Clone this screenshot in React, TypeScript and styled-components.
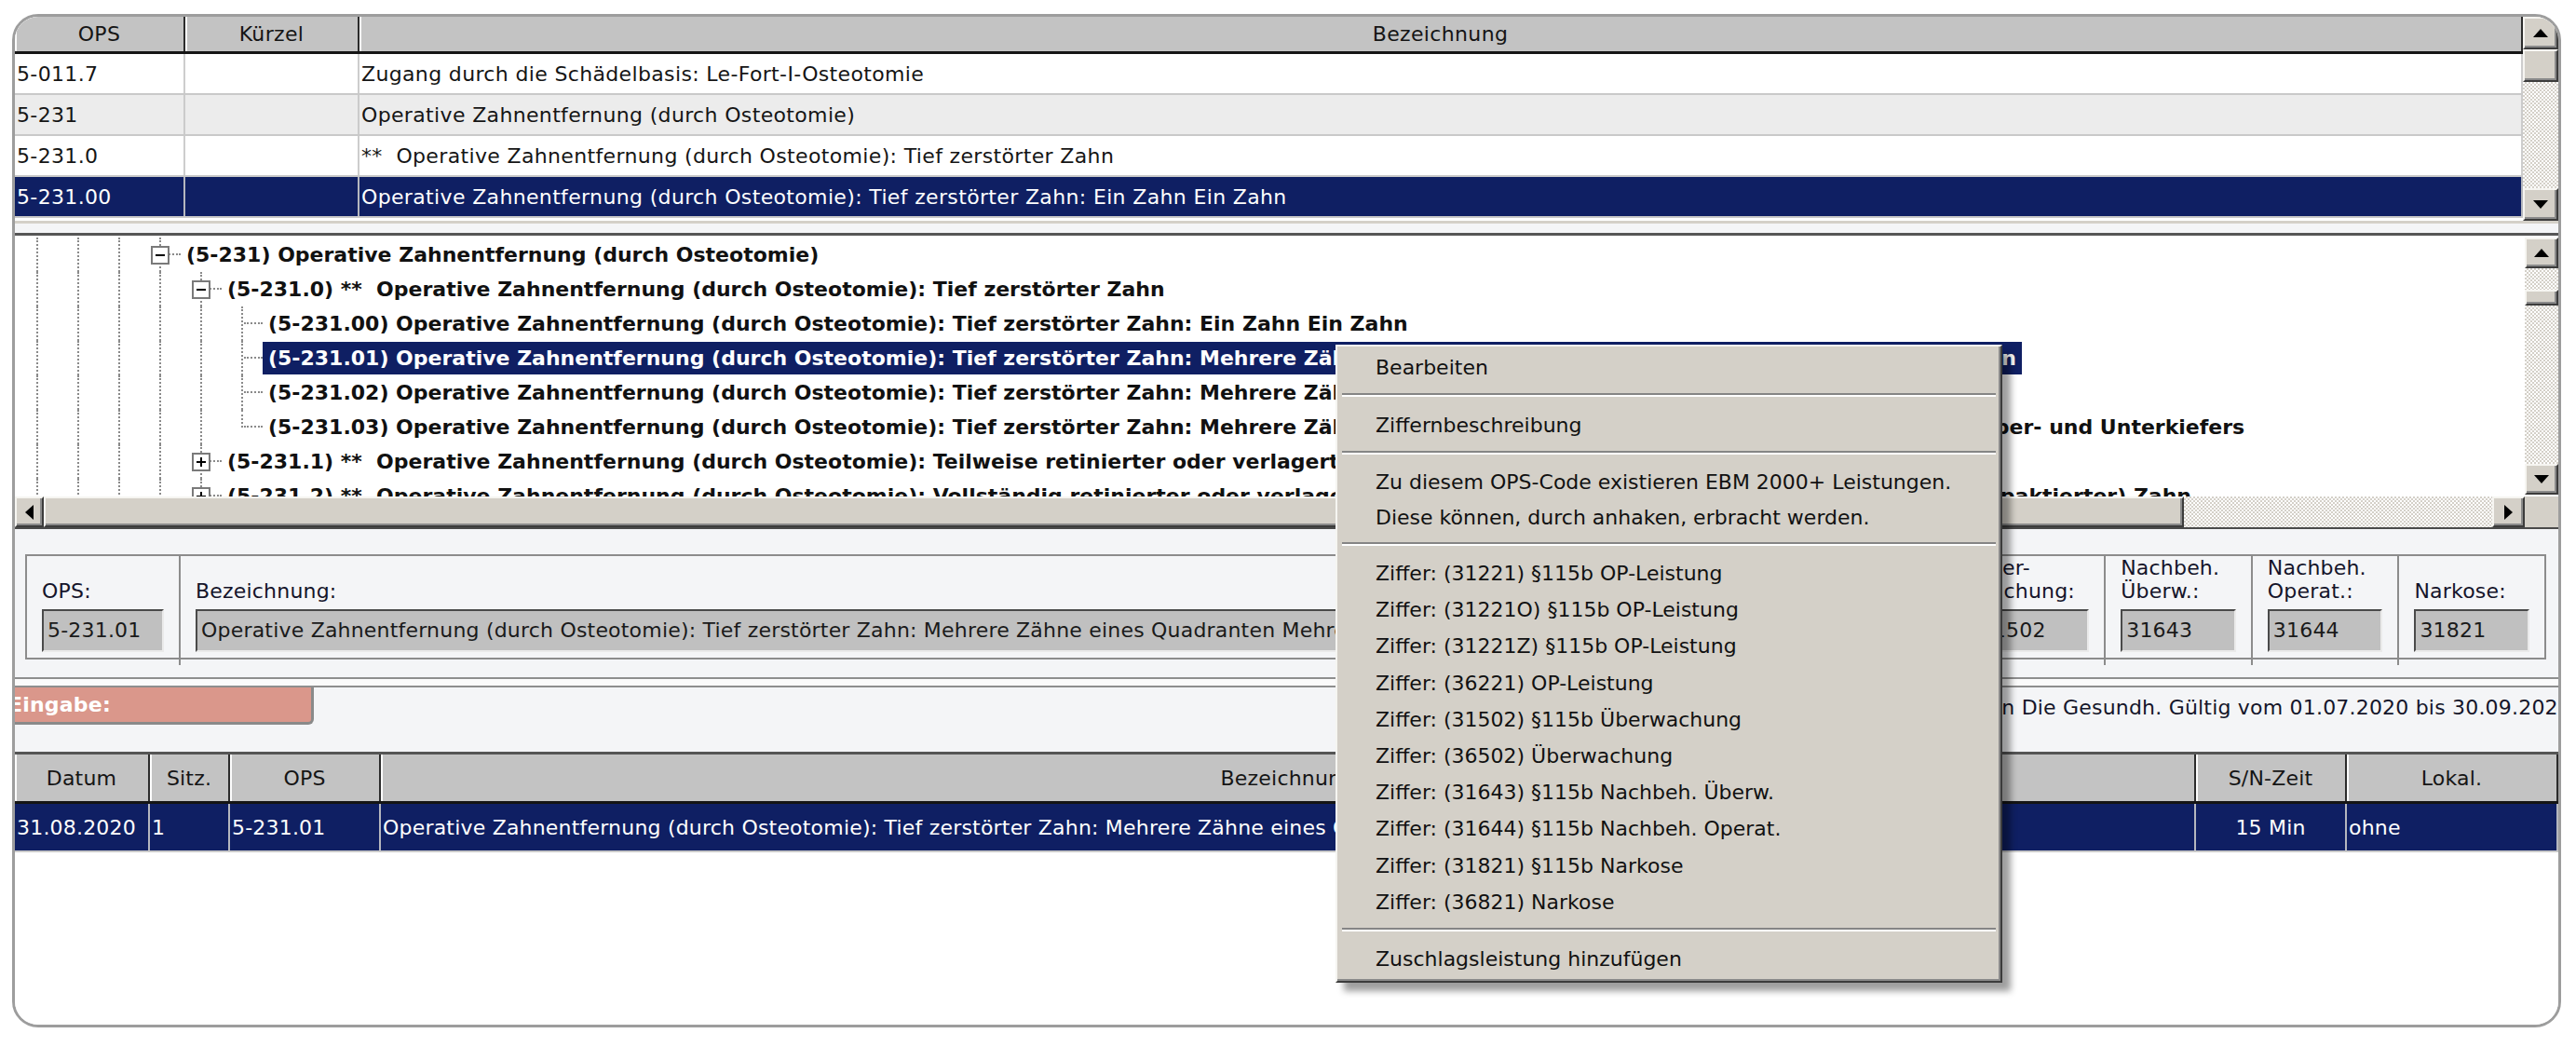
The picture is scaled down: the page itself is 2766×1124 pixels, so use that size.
import React from 'react'
import styled, { createGlobalStyle } from 'styled-components'

const NAVY = '#0f1f63'
const FACE = '#d4d0c8'

const GlobalStyle = createGlobalStyle`
  html, body { margin: 0; padding: 0; background: #fff; }
  body {
    font-family: "DejaVu Sans", Verdana, sans-serif;
    font-size: 22px;
    letter-spacing: 0.2px;
    color: #151515;
  }
  * { box-sizing: border-box; }
`

const Page = styled.div`
  position: relative;
  width: 2766px;
  height: 1124px;
  padding: 15px 0 0 13px;
  overflow: hidden;
`
const Frame = styled.div`
  width: 2737px;
  height: 1088px;
  border: 3px solid #9d9d9d;
  border-radius: 28px;
  overflow: hidden;
  background: #f4f5f7;
  display: flex;
  flex-direction: column;
`

/* ---------- scrollbars ---------- */
const Btn = styled.div<{ $w?: number; $h?: number }>`
  flex: none;
  width: ${p => (p.$w ? `${p.$w}px` : '100%')};
  height: ${p => (p.$h ? `${p.$h}px` : '100%')};
  background: ${FACE};
  border: 2px solid;
  border-color: #f6f5f1 #3c3c3c #3c3c3c #f6f5f1;
  box-shadow: inset -2px -2px 0 #8a8a8a;
  display: flex;
  align-items: center;
  justify-content: center;
`
const Track = styled.div<{ $h?: number }>`
  flex: ${p => (p.$h ? 'none' : '1')};
  height: ${p => (p.$h ? `${p.$h}px` : 'auto')};
  background: repeating-conic-gradient(${FACE} 0 25%, #ffffff 0 50%) 0 0 / 4px 4px;
`
const VScroll = styled.div<{ $w: number; $pad?: number }>`
  flex: none;
  width: ${p => p.$w}px;
  padding: ${p => p.$pad ?? 0}px 0;
  display: flex;
  flex-direction: column;
  background: #fff;
`
const HScroll = styled.div`
  flex: none;
  height: 35px;
  display: flex;
  border-bottom: 2px solid #4a4a4a;
  background: ${FACE};
`
const Corner = styled.div`
  flex: none;
  width: 36px;
  background: ${FACE};
`

function Arrow({ dir }: { dir: 'up' | 'down' | 'left' | 'right' }) {
  const vertical = dir === 'up' || dir === 'down'
  const pts = {
    up: '0,9 8,0 16,9',
    down: '0,0 16,0 8,9',
    left: '9,0 9,16 0,8',
    right: '0,0 0,16 9,8',
  }[dir]
  return (
    <svg width={vertical ? 16 : 9} height={vertical ? 9 : 16} viewBox={vertical ? '0 0 16 9' : '0 0 9 16'}>
      <polygon points={pts} fill="#000" />
    </svg>
  )
}

/* ---------- grids ---------- */
const HeadRow = styled.div<{ $cols: string; $h: number }>`
  flex: none;
  display: grid;
  grid-template-columns: ${p => p.$cols};
  height: ${p => p.$h}px;
  background: #c3c3c3;
  border-bottom: 3px solid #151515;
`
const HeadCell = styled.div`
  display: flex;
  align-items: center;
  justify-content: center;
  border-right: 2px solid #2c2c2c;
  box-shadow: inset 2px 0 0 #fdfdfd;
  white-space: nowrap;
  overflow: hidden;
`
const DataRow = styled.div<{ $cols: string; $h: number; $tone: 'white' | 'alt' | 'sel' }>`
  flex: none;
  display: grid;
  grid-template-columns: ${p => p.$cols};
  height: ${p => p.$h}px;
  border-bottom: 2px solid #c9c9c9;
  background: ${p => (p.$tone === 'sel' ? NAVY : p.$tone === 'alt' ? '#ececec' : '#fff')};
  color: ${p => (p.$tone === 'sel' ? '#fff' : '#151515')};
`
const DataCell = styled.div<{ $center?: boolean }>`
  display: flex;
  align-items: center;
  justify-content: ${p => (p.$center ? 'center' : 'flex-start')};
  padding: 0 2px;
  border-right: 2px solid rgba(200, 200, 200, 0.9);
  white-space: pre;
  overflow: hidden;
`

const TopSection = styled.div`
  flex: none;
  height: 219px;
  display: flex;
  letter-spacing: 0.35px;
`
const GridBody = styled.div`
  flex: 1;
  display: flex;
  flex-direction: column;
  background: #fff;
  overflow: hidden;
`
const Strip = styled.div`
  flex: none;
  height: 16px;
  border-top: 3px solid ${FACE};
  border-bottom: 3px solid #565656;
  background: #f4f5f7;
`

/* ---------- tree ---------- */
const TreeSection = styled.div`
  flex: none;
  height: 280px;
  display: flex;
  background: #fff;
`
const TreeBody = styled.div`
  flex: 1;
  padding: 2px 0 0 2px;
  overflow: hidden;
`
const TreeRow = styled.div`
  display: flex;
  height: 37px;
  white-space: pre;
`
const Indent = styled.div<{ $line: 'full' | 'half'; $branch?: boolean }>`
  flex: none;
  width: 44px;
  position: relative;
  display: flex;
  align-items: center;
  justify-content: center;
  &::before {
    content: '';
    position: absolute;
    left: 21px;
    top: 0;
    bottom: ${p => (p.$line === 'half' ? '50%' : '0')};
    border-left: 2px dotted #8a8a8a;
  }
  &::after {
    content: '';
    display: ${p => (p.$branch ? 'block' : 'none')};
    position: absolute;
    left: 24px;
    right: 0;
    top: 17px;
    border-top: 2px dotted #8a8a8a;
  }
`
const ExpandBox = styled.span<{ $open: boolean }>`
  position: relative;
  z-index: 1;
  width: 20px;
  height: 20px;
  border: 2px solid #7a7a7a;
  background: #fff;
  &::before {
    content: '';
    position: absolute;
    left: 3px;
    right: 3px;
    top: 7px;
    height: 2px;
    background: #000;
  }
  &::after {
    content: '';
    display: ${p => (p.$open ? 'none' : 'block')};
    position: absolute;
    top: 3px;
    bottom: 3px;
    left: 7px;
    width: 2px;
    background: #000;
  }
`
const NodeLabel = styled.span<{ $sel?: boolean }>`
  align-self: center;
  font-weight: bold;
  letter-spacing: 0;
  padding: 0 6px;
  line-height: 35px;
  background: ${p => (p.$sel ? NAVY : 'transparent')};
  color: ${p => (p.$sel ? '#fff' : '#111')};
`

/* ---------- info ---------- */
const InfoSection = styled.div`
  flex: none;
  height: 159px;
  padding: 27px 13px 0 11px;
`
const FieldGroup = styled.div`
  height: 113px;
  display: grid;
  grid-template-columns: 163px 1752px repeat(5, 1fr);
  border: 2px solid #8c8c8c;
`
const Field = styled.div<{ $first?: boolean }>`
  display: flex;
  flex-direction: column;
  justify-content: flex-end;
  padding: 0 16px 14px;
  border-left: ${p => (p.$first ? 'none' : '2px solid #8c8c8c')};
  min-width: 0;
`
const FieldLabel = styled.div`
  align-self: flex-start;
  line-height: 25px;
  white-space: pre;
  padding-right: 6px;
  margin-bottom: 7px;
  background: #f4f5f7;
  color: #14142a;
`
const FieldInput = styled.div`
  height: 46px;
  flex: none;
  background: #c0c0c0;
  border: 2px solid;
  border-color: #4a4a4a #eaeaea #eaeaea #4a4a4a;
  padding-left: 4px;
  line-height: 42px;
  white-space: nowrap;
  overflow: hidden;
  color: #1a1a1a;
`
const DoubleRule = styled.div`
  flex: none;
  height: 11px;
  border-top: 2px solid #8e8e8e;
  border-bottom: 2px solid #8e8e8e;
  background: #fbfbfb;
`
const MessageRow = styled.div`
  flex: none;
  height: 69px;
  display: flex;
  align-items: flex-start;
  overflow: hidden;
`
const InputBar = styled.div`
  flex: none;
  width: 321px;
  height: 40px;
  background: #da978b;
  border-right: 3px solid #8a8a8a;
  border-bottom: 3px solid #8a8a8a;
  border-bottom-right-radius: 6px;
  color: #fff;
  font-weight: bold;
  line-height: 37px;
  text-indent: -7px;
  overflow: hidden;
  white-space: nowrap;
`
const MessageText = styled.div`
  margin-left: auto;
  margin-right: -14px;
  padding-top: 9px;
  white-space: nowrap;
  color: #15152a;
`

/* ---------- bottom grid ---------- */
const BottomGrid = styled.div`
  flex: 1;
  display: flex;
  flex-direction: column;
  border-top: 3px solid #555;
  background: #fff;
`

/* ---------- context menu ---------- */
const Menu = styled.div`
  position: absolute;
  left: 1434px;
  top: 370px;
  width: 716px;
  padding: 2px 3px 3px;
  background: ${FACE};
  border: 2px solid;
  border-color: #f6f5f1 #3c3c3c #3c3c3c #f6f5f1;
  box-shadow: inset -2px -2px 0 #8a8a8a, 9px 9px 7px rgba(0, 0, 0, 0.38);
  color: #111;
  letter-spacing: 0;
`
const MenuItem = styled.div<{ $h: number }>`
  height: ${p => p.$h}px;
  display: flex;
  align-items: center;
  padding-left: 38px;
  white-space: nowrap;
`
const MenuSep = styled.div`
  height: 22px;
  padding: 8px 2px 0;
  &::before {
    content: '';
    display: block;
    height: 2px;
    background: #858585;
    border-bottom: 2px solid #fff;
    box-sizing: content-box;
  }
`

const TOP_COLS = '183px 187px 1fr'
const BOTTOM_COLS = '145px 86px 162px 1949px 162px 1fr'

const topRows: { ops: string; text: string; tone: 'white' | 'alt' | 'sel' }[] = [
  { ops: '5-011.7', text: 'Zugang durch die Schädelbasis: Le-Fort-I-Osteotomie', tone: 'white' },
  { ops: '5-231', text: 'Operative Zahnentfernung (durch Osteotomie)', tone: 'alt' },
  { ops: '5-231.0', text: '**  Operative Zahnentfernung (durch Osteotomie): Tief zerstörter Zahn', tone: 'white' },
  { ops: '5-231.00', text: 'Operative Zahnentfernung (durch Osteotomie): Tief zerstörter Zahn: Ein Zahn Ein Zahn', tone: 'sel' },
]

const base = 'Operative Zahnentfernung (durch Osteotomie)'
type TreeNode = { level: number; text: string; box?: 'open' | 'closed'; last?: boolean; sel?: boolean }
const tree: TreeNode[] = [
  { level: 3, box: 'open', text: `(5-231) ${base}` },
  { level: 4, box: 'open', text: `(5-231.0) **  ${base}: Tief zerstörter Zahn` },
  { level: 5, text: `(5-231.00) ${base}: Tief zerstörter Zahn: Ein Zahn Ein Zahn` },
  { level: 5, sel: true, text: `(5-231.01) ${base}: Tief zerstörter Zahn: Mehrere Zähne eines Quadranten  –  Mehrere Zähne eines Quadranten` },
  { level: 5, text: `(5-231.02) ${base}: Tief zerstörter Zahn: Mehrere Zähne eines Kiefers Mehrere Zähne eines Kiefers` },
  { level: 5, last: true, text: `(5-231.03) ${base}: Tief zerstörter Zahn: Mehrere Zähne eines Ober- und Unterkiefers Mehrere Zähne eines Ober- und Unterkiefers` },
  { level: 4, box: 'closed', text: `(5-231.1) **  ${base}: Teilweise retinierter oder verlagerter (impaktierter) Zahn` },
  { level: 4, box: 'closed', text: `(5-231.2) **  ${base}: Vollständig retinierter oder verlagerter (impaktierter) Zahn: Vollst. retin. oder verlagert (impaktierter) Zahn` },
]

const fields = [
  { label: '\nOPS:', value: '5-231.01' },
  { label: '\nBezeichnung:', value: 'Operative Zahnentfernung (durch Osteotomie): Tief zerstörter Zahn: Mehrere Zähne eines Quadranten Mehrere Zähne eines Quadranten' },
  { label: 'OP-\nLeistung:', value: '31221' },
  { label: 'Über-\nwachung:', value: '31502' },
  { label: 'Nachbeh.\nÜberw.:', value: '31643' },
  { label: 'Nachbeh.\nOperat.:', value: '31644' },
  { label: '\nNarkose:', value: '31821' },
]

const menuItems: { type: 'item' | 'sep'; text?: string; h?: number }[] = [
  { type: 'item', text: 'Bearbeiten', h: 40 },
  { type: 'sep' },
  { type: 'item', text: 'Ziffernbeschreibung', h: 40 },
  { type: 'sep' },
  { type: 'item', text: 'Zu diesem OPS-Code existieren EBM 2000+ Leistungen.', h: 38 },
  { type: 'item', text: 'Diese können, durch anhaken, erbracht werden.', h: 38 },
  { type: 'sep' },
  ...[
    '(31221) §115b OP-Leistung',
    '(31221O) §115b OP-Leistung',
    '(31221Z) §115b OP-Leistung',
    '(36221) OP-Leistung',
    '(31502) §115b Überwachung',
    '(36502) Überwachung',
    '(31643) §115b Nachbeh. Überw.',
    '(31644) §115b Nachbeh. Operat.',
    '(31821) §115b Narkose',
    '(36821) Narkose',
  ].map(t => ({ type: 'item' as const, text: `Ziffer: ${t}`, h: 39.2 })),
  { type: 'sep' },
  { type: 'item', text: 'Zuschlagsleistung hinzufügen', h: 40 },
]

function TreeLine({ node }: { node: TreeNode }) {
  const ancestors = Array.from({ length: node.level })
  return (
    <TreeRow>
      {ancestors.map((_, i) => (
        <Indent key={i} $line="full" />
      ))}
      <Indent $line={node.last ? 'half' : 'full'} $branch>
        {node.box && <ExpandBox $open={node.box === 'open'} />}
      </Indent>
      <NodeLabel $sel={node.sel}>{node.text}</NodeLabel>
    </TreeRow>
  )
}

export default function App() {
  return (
    <Page>
      <GlobalStyle />
      <Frame>
        <TopSection>
          <GridBody>
            <HeadRow $cols={TOP_COLS} $h={40}>
              <HeadCell>OPS</HeadCell>
              <HeadCell>Kürzel</HeadCell>
              <HeadCell>Bezeichnung</HeadCell>
            </HeadRow>
            {topRows.map(r => (
              <DataRow key={r.ops} $cols={TOP_COLS} $h={44} $tone={r.tone}>
                <DataCell>{r.ops}</DataCell>
                <DataCell />
                <DataCell>{r.text}</DataCell>
              </DataRow>
            ))}
          </GridBody>
          <VScroll $w={38}>
            <Btn $h={35}><Arrow dir="up" /></Btn>
            <Btn $h={35} />
            <Track />
            <Btn $h={35}><Arrow dir="down" /></Btn>
          </VScroll>
        </TopSection>
        <Strip />

        <TreeSection>
          <TreeBody>
            {tree.map(n => (
              <TreeLine key={n.text} node={n} />
            ))}
          </TreeBody>
          <VScroll $w={36} $pad={2}>
            <Btn $h={33}><Arrow dir="up" /></Btn>
            <Track $h={23} />
            <Btn $h={17} />
            <Track />
            <Btn $h={33}><Arrow dir="down" /></Btn>
          </VScroll>
        </TreeSection>
        <HScroll>
          <Btn $w={31}><Arrow dir="left" /></Btn>
          <Btn $w={2298} />
          <Track />
          <Btn $w={35}><Arrow dir="right" /></Btn>
          <Corner />
        </HScroll>

        <InfoSection>
          <FieldGroup>
            {fields.map((f, i) => (
              <Field key={f.label} $first={i === 0}>
                <FieldLabel>{f.label}</FieldLabel>
                <FieldInput>{f.value}</FieldInput>
              </Field>
            ))}
          </FieldGroup>
        </InfoSection>
        <DoubleRule />
        <MessageRow>
          <InputBar>Eingabe:</InputBar>
          <MessageText>
            Deutsches Institut für Medizinische Dokumentation Die Gesundh. Gültig vom 01.07.2020 bis 30.09.2020
          </MessageText>
        </MessageRow>

        <BottomGrid>
          <HeadRow $cols={BOTTOM_COLS} $h={53}>
            <HeadCell>Datum</HeadCell>
            <HeadCell>Sitz.</HeadCell>
            <HeadCell>OPS</HeadCell>
            <HeadCell>Bezeichnung</HeadCell>
            <HeadCell>S/N-Zeit</HeadCell>
            <HeadCell>Lokal.</HeadCell>
          </HeadRow>
          <DataRow $cols={BOTTOM_COLS} $h={52} $tone="sel">
            <DataCell>31.08.2020</DataCell>
            <DataCell>1</DataCell>
            <DataCell>5-231.01</DataCell>
            <DataCell>
              Operative Zahnentfernung (durch Osteotomie): Tief zerstörter Zahn: Mehrere Zähne eines Quadranten Mehrere Zähne eines Quadranten
            </DataCell>
            <DataCell $center>15 Min</DataCell>
            <DataCell>ohne</DataCell>
          </DataRow>
        </BottomGrid>
      </Frame>

      <Menu>
        {menuItems.map((m, i) =>
          m.type === 'sep' ? (
            <MenuSep key={i} />
          ) : (
            <MenuItem key={i} $h={m.h ?? 40}>{m.text}</MenuItem>
          )
        )}
      </Menu>
    </Page>
  )
}
